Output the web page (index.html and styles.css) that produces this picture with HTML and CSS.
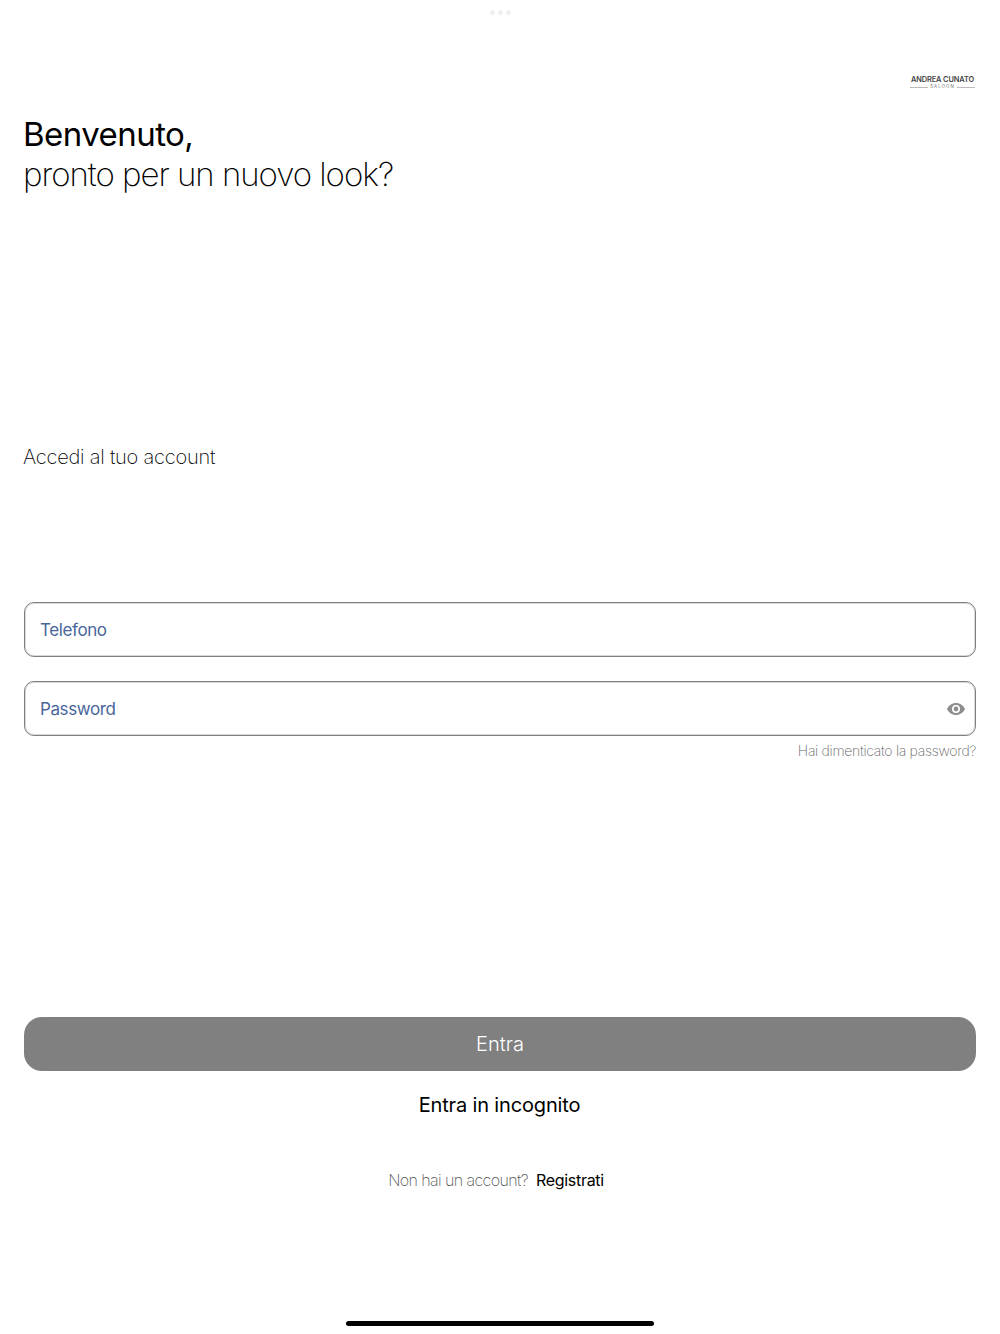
FILE: index.html
```html
<!DOCTYPE html>
<html lang="it">
<head>
  <meta charset="UTF-8">
  <meta name="viewport" content="width=device-width, initial-scale=1.0">
  <title>Accedi</title>
  <link rel="stylesheet" href="styles.css">
</head>
<body>
  <div class="page">
    <div class="dots"><span></span><span></span><span></span></div>

    <div class="logo">
      <div class="logo-name">ANDREA CUNATO</div>
      <div class="logo-sub">SALOON</div>
    </div>

    <h1 class="title"><strong>Benvenuto,</strong><br>pronto per un nuovo look?</h1>

    <p class="subtitle">Accedi al tuo account</p>

    <form class="login-form">
      <div class="field">Telefono</div>
      <div class="field">
        Password
        <svg class="eye" width="18" height="12" viewBox="0 0 18 12">
          <path fill="#8e8e8e" fill-rule="evenodd" d="M9 0C5 0 1.6 2.5 0 6c1.600 3.500 5 6 9 6s7.400-2.500 9-6c-1.600-3.500-5-6-9-6zm0 10a4 4 0 1 1 0-8 4 4 0 0 1 0 8zm0-6.400a2.400 2.400 0 1 0 0 4.800 2.400 2.400 0 0 0 0-4.800z"/>
        </svg>
      </div>
      <a class="forgot">Hai dimenticato la password?</a>
    </form>

    <button class="btn-primary" type="button">Entra</button>
    <a class="incognito">Entra in incognito</a>

    <p class="signup"><span>Non hai un account?</span> <a>Registrati</a></p>

    <div class="home-bar"></div>
  </div>
</body>
</html>
```

FILE: styles.css
```css
* { box-sizing: border-box; }
html, body { margin: 0; padding: 0; background: #fff; }
body { font-family: Inter, "Liberation Sans", sans-serif; color: #000; }

.page { height: 1334px; padding: 0 24px; display: flex; flex-direction: column; overflow: hidden; }

.dots { display: flex; justify-content: center; gap: 3px; padding-top: 10px; height: 75px; }
.dots span { width: 5px; height: 5px; border-radius: 50%; background: #efefef; }

.logo { align-self: flex-end; width: 65px; height: 15px; margin-right: 1px; color: #444; text-align: center; }
.logo-name { font-size: 7.4px; line-height: 9px; font-weight: 600; letter-spacing: -0.1px; white-space: nowrap; }
.logo-sub { display: flex; align-items: center; gap: 2px; font-size: 4.5px; line-height: 6px; letter-spacing: 1px; color: #777; }
.logo-sub::before, .logo-sub::after { content: ""; flex: 1; height: 1px; background: #bbb; }

.title { margin: 24px 0 0 -1px; font-size: 33px; line-height: 40px; font-weight: 200; letter-spacing: -1.03px; }
.title strong { font-weight: 400; letter-spacing: -0.55px; }

.subtitle { margin: 249px 0 0 -1px; font-size: 20px; line-height: 28px; font-weight: 200; letter-spacing: -0.22px; }

.login-form { margin-top: 131px; display: flex; flex-direction: column; gap: 24px; }
.field { height: 55px; padding: 0 10px 0 15px; display: flex; align-items: center; justify-content: space-between; border: 1px solid #808080; border-radius: 10px; box-shadow: inset 0 0 0 1px rgba(128, 128, 128, 0.3); font-size: 17px; color: #48669a; letter-spacing: -0.4px; }
.forgot { margin-top: -19px; text-align: right; font-size: 14px; line-height: 20px; font-weight: 200; color: #666; letter-spacing: -0.3px; }

.btn-primary { margin-top: 256px; height: 54px; flex: none; border: 0; border-radius: 18px; background: #808080; color: #fff; font-family: inherit; font-size: 20px; font-weight: 300; }

.incognito { margin-top: 20px; padding-right: 1px; text-align: center; font-size: 20px; line-height: 28px; letter-spacing: -0.15px; }

.signup { margin: 49px 0 0; padding-right: 8px; display: flex; justify-content: center; gap: 8px; font-size: 16px; line-height: 24px; letter-spacing: -0.3px; }
.signup span { font-weight: 200; color: #555; letter-spacing: -0.6px; }

.home-bar { width: 308px; height: 5px; margin: 129px auto 0; flex: none; border-radius: 3px; background: #000; }
```
